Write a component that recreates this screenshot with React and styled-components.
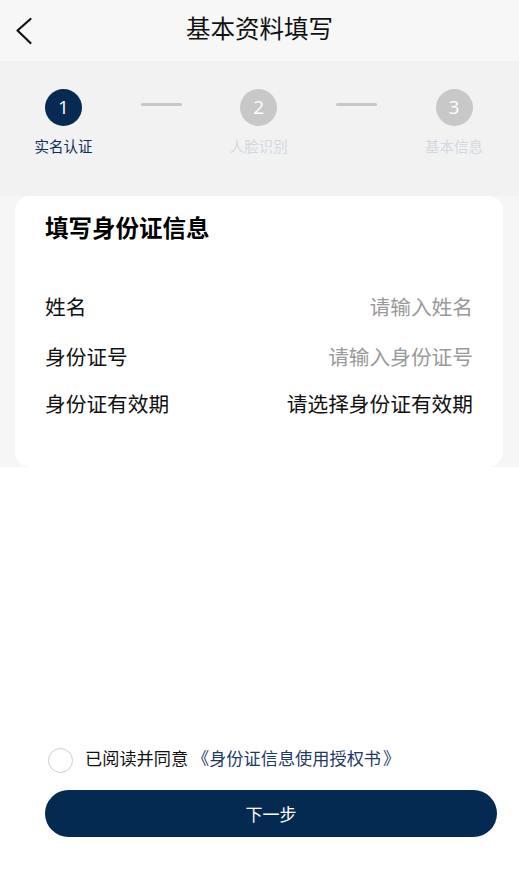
import React from "react";
import styled, { createGlobalStyle } from "styled-components";

const Global = createGlobalStyle`
  html, body { margin: 0; padding: 0; background: #ffffff; }
  body { font-family: "Noto Sans CJK SC", "Noto Sans", sans-serif; }
  * { box-sizing: border-box; }
`;

const Page = styled.div`
  min-height: 100vh;
  display: flex;
  flex-direction: column;
  background: #ffffff;
`;

const Header = styled.header`
  height: 61px;
  background: #f7f7f7;
  display: grid;
  grid-template-columns: 60px 1fr 60px;
  align-items: center;
`;

const BackButton = styled.button`
  border: 0;
  background: transparent;
  padding: 0 0 0 15px;
  height: 61px;
  display: flex;
  align-items: center;
  cursor: pointer;
`;

const Title = styled.h1`
  margin: 0;
  text-align: center;
  font-size: 24.5px;
  font-weight: 400;
  color: #111111;
  line-height: 1;
  padding-bottom: 4px;
`;

const StepsBand = styled.section`
  background: #f2f2f2;
  height: 135px;
  padding: 28px 25px 0 23.5px;
  display: grid;
  grid-template-columns: 80px 1fr 80px 1fr 80px;
  align-items: start;
`;

const Step = styled.div`
  display: flex;
  flex-direction: column;
  align-items: center;
`;

const StepCircle = styled.div`
  width: 37px;
  height: 37px;
  border-radius: 50%;
  background: ${(p) => (p.$active ? "#062a52" : "#c8c8c8")};
  color: #ffffff;
  display: flex;
  align-items: center;
  justify-content: center;
  font-family: "Open Sans", "Noto Sans", sans-serif;
  font-size: 19px;
  line-height: 1;
`;

const StepLabel = styled.div`
  margin-top: 10px;
  font-size: 14.5px;
  line-height: 20px;
  color: ${(p) => (p.$active ? "#0d2d55" : "#d2d8e0")};
`;

const Connector = styled.div`
  justify-self: center;
  width: 41px;
  height: 3px;
  margin-top: 14px;
  background: #c8c8c8;
  border-radius: 2px;
`;

const FormSection = styled.section`
  background: #f6f6f6;
  padding: 0 16px 0 15px;
`;

const Card = styled.div`
  background: #ffffff;
  border-radius: 15px;
  padding: 14.5px 30px 42px 30px;
  display: flex;
  flex-direction: column;
`;

const CardTitle = styled.h2`
  margin: 0 0 39px;
  font-size: 23.5px;
  line-height: 32px;
  font-weight: 700;
  color: #000000;
`;

const Row = styled.div`
  height: ${(p) => p.$h}px;
  display: flex;
  align-items: center;
  justify-content: space-between;
  font-size: 20.7px;
`;

const RowLabel = styled.span`
  color: #111111;
`;

const RowValue = styled.span`
  color: ${(p) => (p.$placeholder ? "#9a9a9a" : "#111111")};
`;

const Spacer = styled.div`
  flex: 1;
`;

const Bottom = styled.footer`
  padding: 0 22px 57px 45px;
  display: flex;
  flex-direction: column;
`;

const Agreement = styled.label`
  display: flex;
  align-items: center;
  gap: 12px;
  margin-left: 3px;
  height: 26px;
  margin-bottom: 18px;
  font-size: 17.2px;
  color: #111111;
`;

const CheckCircle = styled.span`
  width: 25px;
  height: 25px;
  border-radius: 50%;
  border: 1px solid #cfcfcf;
  background: #ffffff;
  flex: none;
  margin-top: 3px;
`;

const AgreeText = styled.span`
  margin-top: -3px;
  white-space: nowrap;
`;

const Link = styled.span`
  color: #1c3a68;
`;

const Bracket = styled.span`
  display: inline-block;
  width: ${(p) => (p.$open ? "21px" : "17px")};
  text-align: ${(p) => (p.$open ? "right" : "left")};
  padding-left: ${(p) => (p.$open ? "0" : "2px")};
`;

const NextButton = styled.button`
  height: 47px;
  width: 100%;
  border: 0;
  border-radius: 24px;
  background: #052a52;
  color: #ffffff;
  font-family: "Noto Sans CJK SC", "Noto Sans", sans-serif;
  font-size: 17px;
  cursor: pointer;
`;

const steps = [
  { n: 1, label: "实名认证", active: true },
  { n: 2, label: "人脸识别" },
  { n: 3, label: "基本信息" },
];

export default function App() {
  return (
    <Page>
      <Global />
      <Header>
        <BackButton aria-label="返回">
          <svg width="18" height="28" viewBox="0 0 18 28" fill="none">
            <path d="M15.5 2 L2.5 13.5 L15.5 26" stroke="#111" strokeWidth="2.2" strokeLinecap="round" strokeLinejoin="round" />
          </svg>
        </BackButton>
        <Title>基本资料填写</Title>
        <div />
      </Header>

      <StepsBand>
        {steps.map((s, i) => (
          <React.Fragment key={s.n}>
            {i > 0 && <Connector />}
            <Step>
              <StepCircle $active={s.active}>{s.n}</StepCircle>
              <StepLabel $active={s.active}>{s.label}</StepLabel>
            </Step>
          </React.Fragment>
        ))}
      </StepsBand>

      <FormSection>
        <Card>
          <CardTitle>填写身份证信息</CardTitle>
          <Row $h={49.5}>
            <RowLabel>姓名</RowLabel>
            <RowValue $placeholder>请输入姓名</RowValue>
          </Row>
          <Row $h={49.5}>
            <RowLabel>身份证号</RowLabel>
            <RowValue $placeholder>请输入身份证号</RowValue>
          </Row>
          <Row $h={44}>
            <RowLabel>身份证有效期</RowLabel>
            <RowValue>请选择身份证有效期</RowValue>
          </Row>
        </Card>
      </FormSection>

      <Spacer />

      <Bottom>
        <Agreement>
          <CheckCircle />
          <AgreeText>
            已阅读并同意
            <Link>
              <Bracket $open>《</Bracket>身份证信息使用授权书<Bracket>》</Bracket>
            </Link>
          </AgreeText>
        </Agreement>
        <NextButton>下一步</NextButton>
      </Bottom>
    </Page>
  );
}
